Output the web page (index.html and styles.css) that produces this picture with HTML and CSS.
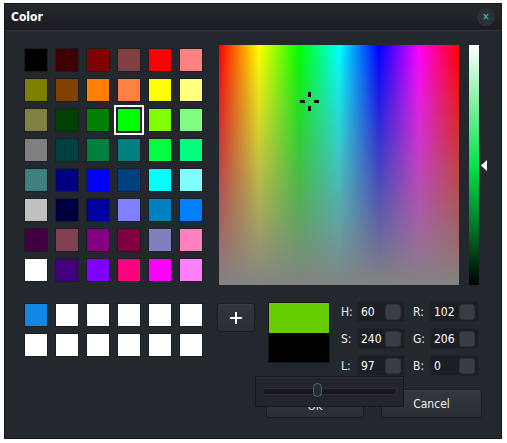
FILE: index.html
```html
<!DOCTYPE html>
<html lang="en">
<head>
    <meta charset="UTF-8">
    <meta name="viewport" content="width=device-width, initial-scale=1.0">
    <title>Color</title>
    <link rel="stylesheet" href="styles.css">
</head>
<body>
    <div class="dialog">
        <div class="titlebar">
            <span class="title">Color</span>
            <span class="close">&times;</span>
        </div>

        <div class="top-row">
            <!-- Basic colors -->
            <div class="palette">
                <div class="swatch" style="background:#000000"></div>
                <div class="swatch" style="background:#400000"></div>
                <div class="swatch" style="background:#800000"></div>
                <div class="swatch" style="background:#804040"></div>
                <div class="swatch" style="background:#ff0000"></div>
                <div class="swatch" style="background:#ff8080"></div>

                <div class="swatch" style="background:#808000"></div>
                <div class="swatch" style="background:#804000"></div>
                <div class="swatch" style="background:#ff8000"></div>
                <div class="swatch" style="background:#ff8040"></div>
                <div class="swatch" style="background:#ffff00"></div>
                <div class="swatch" style="background:#ffff80"></div>

                <div class="swatch" style="background:#808040"></div>
                <div class="swatch" style="background:#004000"></div>
                <div class="swatch" style="background:#008000"></div>
                <div class="swatch selected" style="background:#00ff00"></div>
                <div class="swatch" style="background:#80ff00"></div>
                <div class="swatch" style="background:#80ff80"></div>

                <div class="swatch" style="background:#808080"></div>
                <div class="swatch" style="background:#004040"></div>
                <div class="swatch" style="background:#008040"></div>
                <div class="swatch" style="background:#008080"></div>
                <div class="swatch" style="background:#00ff40"></div>
                <div class="swatch" style="background:#00ff80"></div>

                <div class="swatch" style="background:#408080"></div>
                <div class="swatch" style="background:#000080"></div>
                <div class="swatch" style="background:#0000ff"></div>
                <div class="swatch" style="background:#004080"></div>
                <div class="swatch" style="background:#00ffff"></div>
                <div class="swatch" style="background:#80ffff"></div>

                <div class="swatch" style="background:#c0c0c0"></div>
                <div class="swatch" style="background:#000040"></div>
                <div class="swatch" style="background:#0000a0"></div>
                <div class="swatch" style="background:#8080ff"></div>
                <div class="swatch" style="background:#0080c0"></div>
                <div class="swatch" style="background:#0080ff"></div>

                <div class="swatch" style="background:#400040"></div>
                <div class="swatch" style="background:#804050"></div>
                <div class="swatch" style="background:#800080"></div>
                <div class="swatch" style="background:#800040"></div>
                <div class="swatch" style="background:#8080c0"></div>
                <div class="swatch" style="background:#ff80c0"></div>

                <div class="swatch" style="background:#ffffff"></div>
                <div class="swatch" style="background:#400080"></div>
                <div class="swatch" style="background:#8000ff"></div>
                <div class="swatch" style="background:#ff0080"></div>
                <div class="swatch" style="background:#ff00ff"></div>
                <div class="swatch" style="background:#ff80ff"></div>
            </div>

            <!-- Hue / saturation field -->
            <div class="spectrum">
                <svg class="crosshair" width="19" height="19" viewBox="0 0 19 19">
                    <rect x="8" y="0" width="3" height="5" fill="#000"/>
                    <rect x="8" y="14" width="3" height="5" fill="#000"/>
                    <rect x="0" y="8" width="5" height="3" fill="#000"/>
                    <rect x="14" y="8" width="5" height="3" fill="#000"/>
                </svg>
            </div>

            <div class="lum-bar"></div>
            <div class="lum-arrow-col">
                <svg class="lum-arrow" width="6" height="11" viewBox="0 0 6 11">
                    <polygon points="0,5.5 6,0 6,11" fill="#fff"/>
                </svg>
            </div>
        </div>

        <div class="bottom-row">
            <!-- Custom colors -->
            <div class="custom">
                <div class="swatch" style="background:#1188e6"></div>
                <div class="swatch"></div>
                <div class="swatch"></div>
                <div class="swatch"></div>
                <div class="swatch"></div>
                <div class="swatch"></div>
                <div class="swatch"></div>
                <div class="swatch"></div>
                <div class="swatch"></div>
                <div class="swatch"></div>
                <div class="swatch"></div>
                <div class="swatch"></div>
            </div>

            <button class="btn add-btn">
                <svg width="12" height="12" viewBox="0 0 12 12">
                    <rect x="0" y="5" width="12" height="2" fill="#fff"/>
                    <rect x="5" y="0" width="2" height="12" fill="#fff"/>
                </svg>
            </button>

            <div class="preview">
                <div class="preview-new"></div>
                <div class="preview-old"></div>
            </div>

            <div class="values">
                <span class="label">H:</span>
                <div class="spin"><span>60</span><i></i></div>
                <span class="label gap">R:</span>
                <div class="spin"><span>102</span><i></i></div>

                <span class="label">S:</span>
                <div class="spin"><span>240</span><i></i></div>
                <span class="label gap">G:</span>
                <div class="spin"><span>206</span><i></i></div>

                <span class="label">L:</span>
                <div class="spin"><span>97</span><i></i></div>
                <span class="label gap">B:</span>
                <div class="spin"><span>0</span><i></i></div>
            </div>
        </div>

        <div class="button-row">
            <button class="btn ok-btn">OK</button>
            <button class="btn cancel-btn">Cancel</button>
        </div>

        <!-- Slider popup over the buttons -->
        <div class="slider-popup">
            <div class="groove">
                <div class="handle"></div>
            </div>
        </div>
    </div>
</body>
</html>
```

FILE: styles.css
```css
body {
    margin: 0;
    background: #ffffff;
    font-family: Tahoma, "DejaVu Sans Condensed", "DejaVu Sans", sans-serif;
    font-size: 11px;
    color: #f0f0f0;
}
.dialog {
    position: relative;
    box-sizing: border-box;
    width: 498px;
    height: 436px;
    margin: 3px 0 0 4px;
    background: #23272e;
    border: 1px solid #17191d;
    display: flex;
    flex-direction: column;
}
.titlebar {
    height: 26px;
    flex: none;
    display: flex;
    align-items: center;
    justify-content: space-between;
    padding: 0 6px;
    background: linear-gradient(#25282e, #1a1c21);
    border-bottom: 1px solid #32363d;
}
.title {
    font-weight: bold;
    font-size: 12px;
    color: #ffffff;
}
.close {
    width: 18px;
    height: 18px;
    border-radius: 50%;
    background: #2c3037;
    color: #2fb8b2;
    font-size: 10px;
    font-weight: bold;
    line-height: 18px;
    text-align: center;
}
.top-row {
    display: flex;
    padding: 14px 0 0 20px;
}
.palette, .custom {
    display: grid;
    grid-template-columns: repeat(6, 22px);
    grid-auto-rows: 22px;
    column-gap: 9px;
    row-gap: 8px;
}
.palette {
    margin-top: 4px;
}
.swatch {
    background: #ffffff;
    box-shadow: 0 0 0 1px #1a1d22;
}
.swatch.selected {
    outline: 2px solid #ffffff;
    outline-offset: 2px;
}
.spectrum {
    position: relative;
    width: 240px;
    height: 240px;
    margin-left: 17px;
    background:
        linear-gradient(to bottom, rgba(130,130,130,0), #838383),
        linear-gradient(to right, #ff0000, #ffff00 16.67%, #00ff00 33.33%, #00ffff 50%, #0000ff 66.67%, #ff00ff 83.33%, #ff0000);
}
.crosshair {
    position: absolute;
    left: 81px;
    top: 47px;
}
.lum-bar {
    width: 10px;
    height: 240px;
    margin-left: 10px;
    background: linear-gradient(to bottom, #ffffff, #7ef0a0 25%, #00e64c 50%, #007a28 75%, #000000);
}
.lum-arrow-col {
    margin-left: 2px;
}
.lum-arrow {
    display: block;
    margin-top: 115px;
}
.bottom-row {
    display: flex;
    align-items: flex-start;
    padding: 16px 0 0 20px;
}
.custom {
    margin-top: 3px;
}
.btn {
    box-sizing: border-box;
    font-family: inherit;
    font-size: 11px;
    color: #f0f0f0;
    background: linear-gradient(#32363e, #2a2e35);
    border: 1px solid #191b1f;
    border-radius: 3px;
    box-shadow: inset 0 1px 0 #3a3e46;
    padding: 0;
}
.add-btn {
    width: 38px;
    height: 29px;
    margin: 2px 0 0 15px;
    display: flex;
    align-items: center;
    justify-content: center;
}
.preview {
    box-sizing: border-box;
    width: 62px;
    height: 61px;
    margin: 1px 0 0 13px;
    border: 1px solid #15171b;
    display: flex;
    flex-direction: column;
}
.preview-new {
    flex: 1;
    background: #66ce00;
}
.preview-old {
    flex: 1;
    background: #000000;
}
.values {
    display: grid;
    grid-template-columns: 16px 48px 25px 49px;
    grid-auto-rows: 21px;
    row-gap: 6px;
    margin-left: 11px;
    align-items: center;
}
.label {
    font-size: 12px;
    color: #f0f0f0;
}
.label.gap {
    margin-left: 8px;
}
.spin {
    box-sizing: border-box;
    height: 21px;
    display: flex;
    align-items: center;
    justify-content: space-between;
    padding: 0 3px 0 3px;
    background: #1b1e23;
    border: 1px solid #202329;
    font-size: 12px;
    color: #ffffff;
}
.spin i {
    width: 16px;
    height: 16px;
    border-radius: 3px;
    background: #393d44;
    border: 1px solid #2f3238;
    box-sizing: border-box;
}
.button-row {
    display: flex;
    justify-content: flex-end;
    gap: 17px;
    padding: 13px 19px 0 0;
}
.ok-btn {
    width: 98px;
    height: 29px;
    padding-top: 6px;
}
.cancel-btn {
    width: 101px;
    height: 29px;
    font-size: 12px;
}
.slider-popup {
    position: absolute;
    left: 250px;
    top: 372px;
    box-sizing: border-box;
    width: 149px;
    height: 31px;
    background: #22262c;
    border: 1px solid #15171a;
    box-shadow: inset 0 1px 0 #2c3037;
    display: flex;
    align-items: center;
    padding: 0 6px;
}
.groove {
    position: relative;
    flex: 1;
    height: 5px;
    border-radius: 3px;
    background: #16181b;
    border: 1px solid #2b2f35;
}
.handle {
    position: absolute;
    left: 50px;
    top: -6px;
    box-sizing: border-box;
    width: 9px;
    height: 14px;
    border-radius: 5px;
    background: #262b30;
    border: 1px solid #3e7376;
}
```
